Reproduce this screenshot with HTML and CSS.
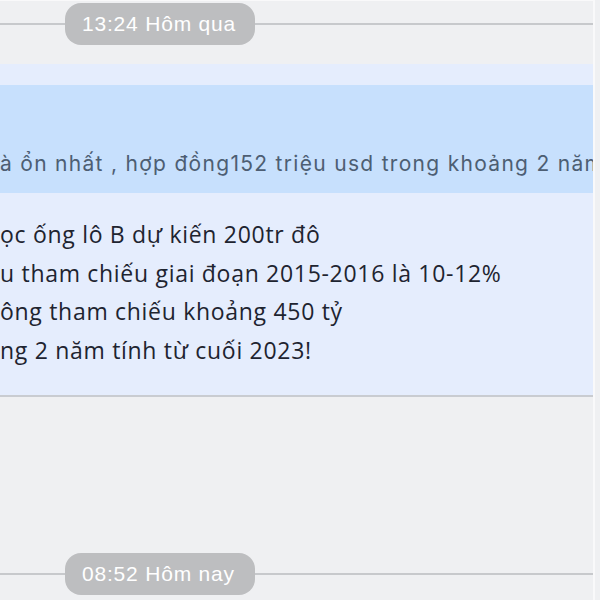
FILE: index.html
```html
<!DOCTYPE html>
<html lang="vi">
<head>
  <meta charset="UTF-8">
  <meta name="viewport" content="width=device-width, initial-scale=1.0">
  <title>Tin nhắn</title>
  <link rel="stylesheet" href="styles.css">
</head>
<body>
  <div class="frame">
    <div class="divider">
      <span class="pill">13:24 Hôm qua</span>
    </div>

    <div class="bubble">
      <div class="quote">
        <p>à ổn nhất , hợp đồng152 triệu usd trong khoảng 2 năm</p>
      </div>
      <div class="message">
        <p>ọc ống lô B dự kiến 200tr đô</p>
        <p>u tham chiếu giai đoạn 2015-2016 là 10-12%</p>
        <p>ông tham chiếu khoảng 450 tỷ</p>
        <p>ng 2 năm tính từ cuối 2023!</p>
      </div>
    </div>

    <div class="divider divider-bottom">
      <span class="pill">08:52 Hôm nay</span>
    </div>
  </div>
</body>
</html>
```

FILE: styles.css
```css
body {
  margin: 0;
  background-color: #eff0f2;
  font-family: "Open Sans", "Noto Sans", sans-serif;
  overflow: hidden;
}
.frame {
  width: 593px;
  height: 600px;
  border-top: 1px solid #f9f9fa;
  border-right: 2px solid #f9f9fa;
  overflow: hidden;
}
.divider {
  display: flex;
  align-items: center;
  margin-top: 2px;
  height: 42px;
}
.divider::before {
  content: "";
  width: 65px;
  height: 2px;
  background: #c7c9cc;
}
.divider::after {
  content: "";
  flex: 1;
  height: 2px;
  background: #c7c9cc;
}
.pill {
  height: 42px;
  width: 190px;
  box-sizing: border-box;
  padding-left: 17px;
  line-height: 42px;
  border-radius: 16px;
  background-color: #bdbec0;
  color: #fff;
  font-family: "Liberation Sans", Arial, sans-serif;
  font-size: 21px;
  letter-spacing: 0.8px;
  white-space: nowrap;
}
.bubble {
  margin-top: 19px;
  padding-top: 21px;
  height: 331px;
  box-sizing: border-box;
  background-color: #e5edfd;
  box-shadow: 0 2px 0 #c9ccd1;
}
.quote {
  height: 108px;
  background-color: #c7e0fd;
  display: flex;
  align-items: flex-end;
}
.quote p {
  margin: 0 0 16px;
  white-space: nowrap;
  color: #4d5e73;
  font-family: Inter, sans-serif;
  font-size: 21px;
  letter-spacing: 1.3px;
  line-height: 26px;
}
.message {
  padding-top: 22px;
}
.message p {
  margin: 0;
  white-space: nowrap;
  color: #1e2430;
  font-size: 23px;
  letter-spacing: 0.7px;
  line-height: 38.6px;
}
.divider-bottom {
  margin-top: 158px;
}
```
